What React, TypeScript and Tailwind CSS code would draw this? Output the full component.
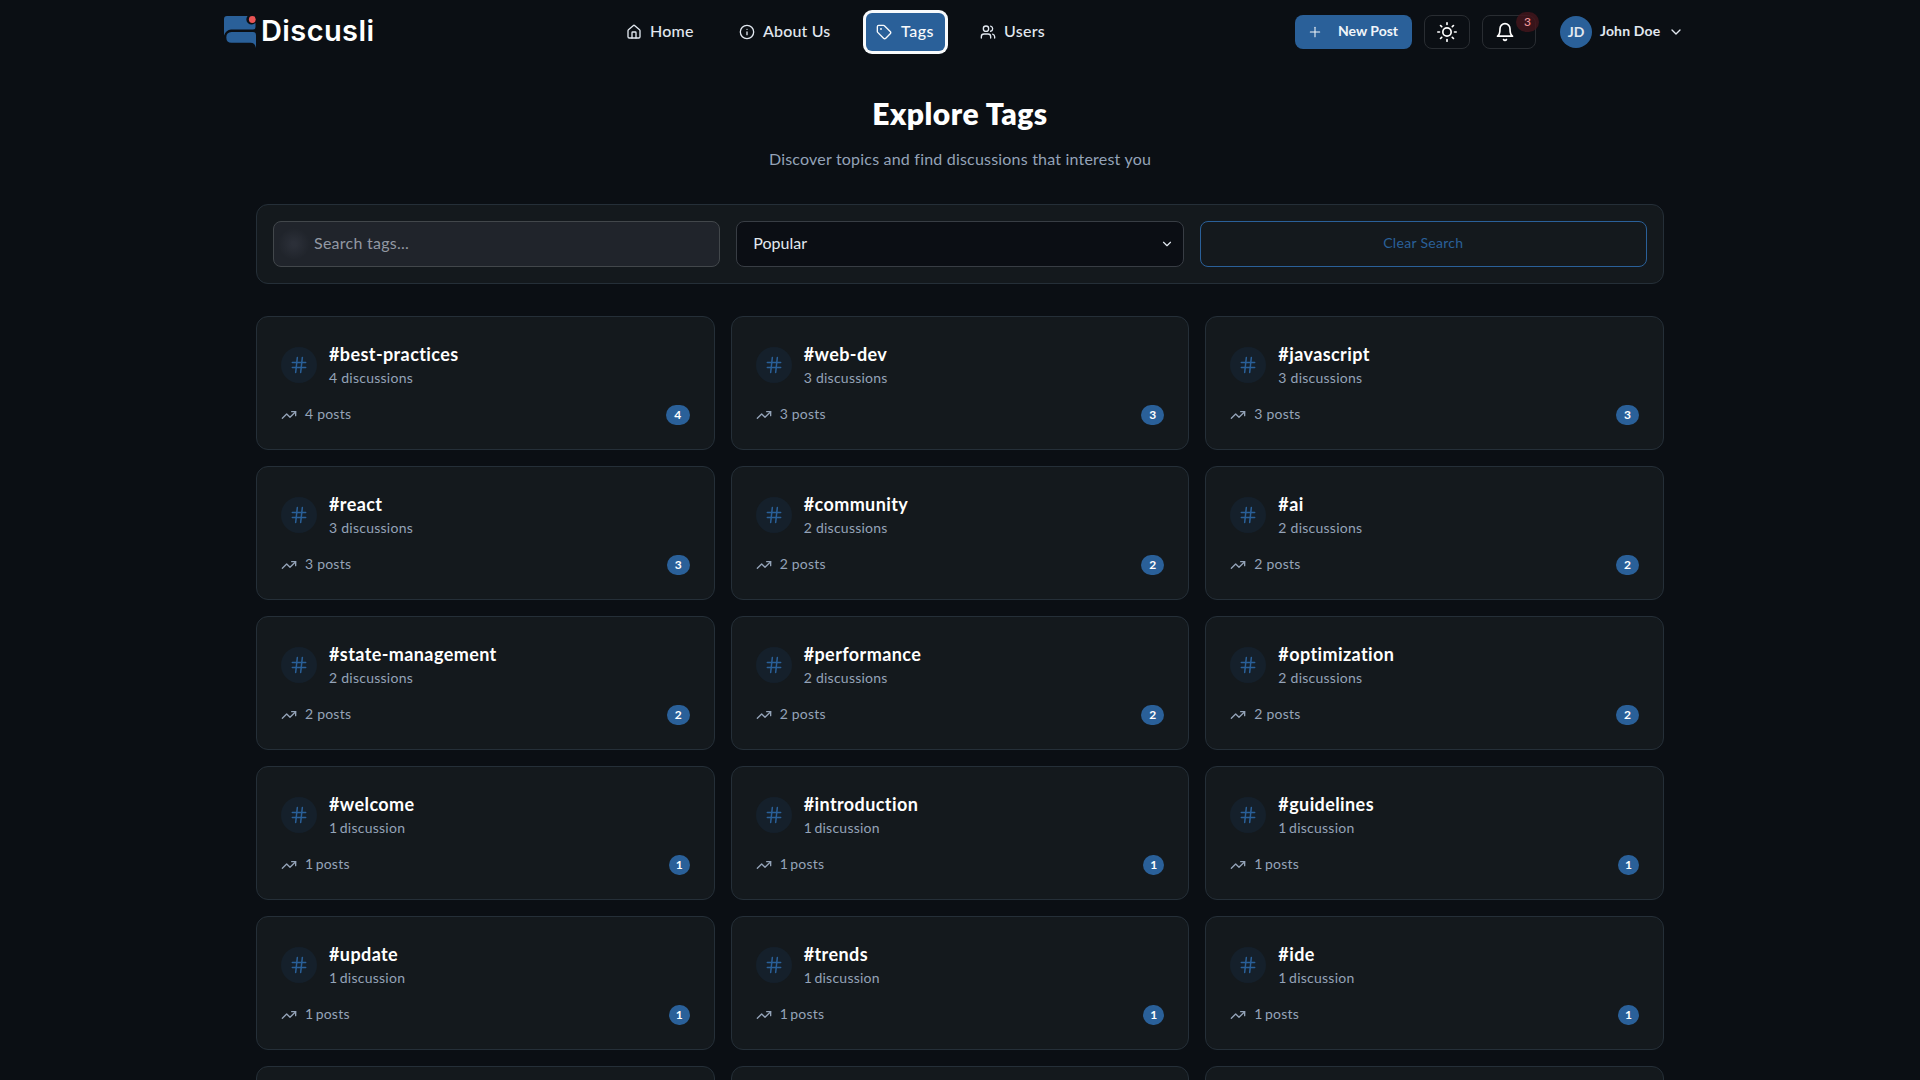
import React from "react";
import { House, Info, Tag, Users, Plus, ChevronDown, Hash, TrendingUp } from "lucide-react";
import { FiBell, FiSun } from "react-icons/fi";

const tags: [string, number][] = [
  ["best-practices", 4], ["web-dev", 3], ["javascript", 3],
  ["react", 3], ["community", 2], ["ai", 2],
  ["state-management", 2], ["performance", 2], ["optimization", 2],
  ["welcome", 1], ["introduction", 1], ["guidelines", 1],
  ["update", 1], ["trends", 1], ["ide", 1],
];

const badgeWidth: Record<number, string> = { 1: "w-[21px]", 2: "w-[23px]", 3: "w-[23px]", 4: "w-6" };

function Logo() {
  return (
    <div className="flex h-8 w-[150px] shrink-0 items-center gap-[5px]">
      <svg width="32" height="32" viewBox="0 0 32 32" className="shrink-0">
        <path d="M3 0H23.600A4.800 4.800 0 0 0 31.500 6.800V11Q31.500 13.500 29 13.500H7Q2 14 0 19.500V3Q0 0 3 0Z" fill="#2a6099" />
        <path d="M7.500 16H29Q32 16 32 19V32Q31 26.800 26.500 26.800H7.500Q2.300 26.500 2.300 21.400Q2.300 16.200 7.500 16Z" fill="#2a6099" />
        <circle cx="28.300" cy="3.500" r="3.400" fill="#ea5455" />
      </svg>
      <span className="-mt-0.5 font-['Inter',sans-serif] text-[29px] leading-8 font-semibold tracking-[0.4px] text-white">Discusli</span>
    </div>
  );
}

function TagCard({ name, count }: { name: string; count: number }) {
  const numberClass = count === 1 ? "-mr-[1.5px]" : "";
  return (
    <article className="h-[134px] rounded-xl border border-[#252f38] bg-[#14191d] p-6">
      <div className="flex h-12 items-center gap-3">
        <div className="flex size-9 items-center justify-center rounded-full bg-[#15202b] text-[#2a6099]">
          <Hash size={20} strokeWidth={1.8} />
        </div>
        <div className="-mt-0.5">
          <h3 className="text-lg leading-7 font-bold tracking-[0.4px] whitespace-nowrap text-white">#{name}</h3>
          <p className="text-sm leading-5 tracking-[0.25px] text-[#94a3b8]"><span className={numberClass}>{count}</span> {count === 1 ? "discussion" : "discussions"}</p>
        </div>
      </div>
      <div className="mt-4 flex h-5 items-center justify-between">
        <div className="flex items-center gap-2 text-[#94a3b8]">
          <TrendingUp size={16} />
          <span className="-mt-0.5 text-sm leading-5 tracking-[0.22px]"><span className={numberClass}>{count}</span> posts</span>
        </div>
        <span className={`flex h-5 items-center justify-center rounded-full bg-[#2a6099] text-xs font-bold text-white ${badgeWidth[count]}`}>{count}</span>
      </div>
    </article>
  );
}

export default function App() {
  return (
    <div className="h-[1080px] w-full overflow-hidden bg-[#0b0f14] font-['Lato',sans-serif] text-slate-200">
      <header className="mx-auto flex h-16 w-[1472px] items-center">
        <Logo />
        <nav className="ml-[242px] flex items-center gap-6 text-base font-medium tracking-[0.25px]">
          <a className="flex h-[38px] w-[89px] items-center gap-2 pl-2.5"><House size={16} className="shrink-0" /><span className="-mt-0.5">Home</span></a>
          <a className="flex h-[38px] w-[113px] items-center gap-2 pl-2.5 whitespace-nowrap"><Info size={16} className="shrink-0" /><span className="-mt-0.5 tracking-[0.15px]">About Us</span></a>
          <a className="flex h-[38px] w-[79px] items-center gap-2 rounded-md bg-[#2a6099] pl-2.5 text-slate-50 ring-3 ring-slate-50"><Tag size={16} className="shrink-0" /><span className="-mt-0.5 ml-px tracking-[0.5px]">Tags</span></a>
          <a className="flex h-[38px] items-center gap-2 pl-[11px]"><Users size={16} className="shrink-0" /><span className="-mt-0.5 tracking-[0.3px]">Users</span></a>
        </nav>
        <div className="mr-2 ml-auto flex items-center gap-3">
          <button className="flex h-[34px] w-[117px] items-center gap-[15px] rounded-lg bg-[#2a6099] pl-3 text-sm font-bold text-slate-100"><Plus size={16} strokeWidth={1.6} /><span className="-mt-0.5">New Post</span></button>
          <button className="flex h-[34px] w-[46px] items-center justify-center rounded-lg border border-[#292d32] text-white"><FiSun size={20} /></button>
          <button className="relative flex h-[34px] w-[54px] items-center rounded-lg border border-[#292d32] pl-3 text-white">
            <FiBell size={20} />
            <span className="absolute -top-1 -right-1 flex h-5 w-[23px] items-center justify-center rounded-full bg-[#45151c]/80 text-xs font-medium text-[#f2999c]">3</span>
          </button>
          <div className="ml-3 flex w-[128px] items-center gap-2">
            <span className="flex size-8 shrink-0 items-center justify-center rounded-full bg-[#2a6099] pb-px text-sm font-bold">JD</span>
            <span className="-mt-0.5 w-[62px] text-sm font-bold tracking-[0.15px] whitespace-nowrap">John Doe</span>
            <ChevronDown size={16} className="-ml-0.5" />
          </div>
        </div>
      </header>
      <main className="mx-auto w-[1408px] pt-[31px]">
        <h1 className="text-center text-3xl font-extrabold tracking-[0.5px] text-white">Explore Tags</h1>
        <p className="mt-4 text-center text-base tracking-[0.2px] text-[#94a3b8]">Discover topics and find discussions that interest you</p>
        <section className="mt-[33px] grid h-20 grid-cols-3 gap-4 rounded-xl border border-[#252f38] bg-[#14191d] p-4">
          <div className="relative flex items-center rounded-lg border border-[#42474b] bg-[#20242b] pl-10 text-base text-[#9298a3]">
            <span className="absolute top-1.5 left-1 size-8 rounded-full bg-[radial-gradient(circle,#2b2f38_10%,transparent_70%)]" />
            <span className="-mt-0.5 tracking-[0.25px]">Search tags...</span>
          </div>
          <div className="flex items-center justify-between rounded-lg border border-[#383d44] bg-[#0b0e14] pr-[9px] pl-4 text-base"><span className="-mt-0.5">Popular</span><ChevronDown size={14} /></div>
          <button className="rounded-lg border border-[#2a6099] pb-0.5 text-sm tracking-[0.3px] text-[#2a6099]">Clear Search</button>
        </section>
        <section className="mt-8 grid grid-cols-3 gap-4">
          {tags.map(([name, count]) => <TagCard key={name} name={name} count={count} />)}
          <div className="h-[134px] rounded-xl border border-[#252f38] bg-[#14191d]" />
          <div className="h-[134px] rounded-xl border border-[#252f38] bg-[#14191d]" />
          <div className="h-[134px] rounded-xl border border-[#252f38] bg-[#14191d]" />
        </section>
      </main>
    </div>
  );
}
